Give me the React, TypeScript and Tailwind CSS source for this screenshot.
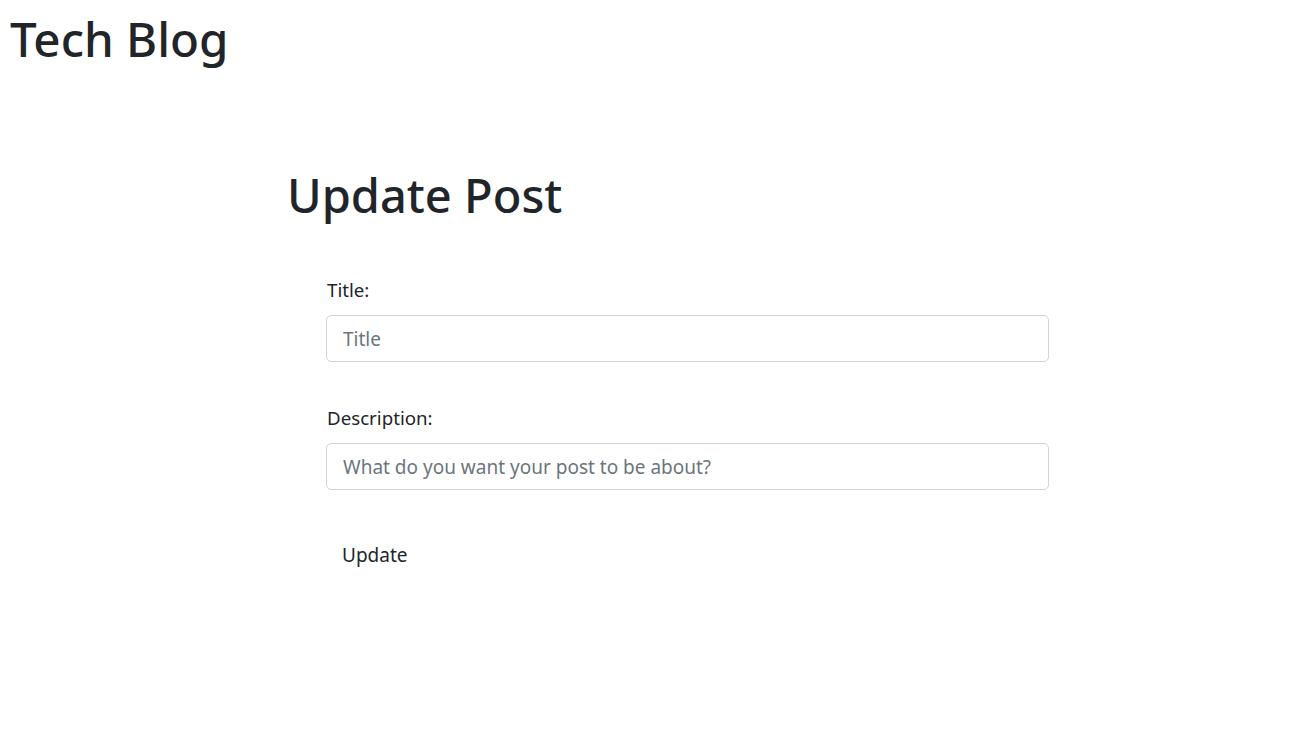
export default function App() {
  return (
    <div className="min-h-screen bg-white text-[#212529] font-['Noto_Sans',sans-serif]">
      <header className="px-[10px] pt-[10px]">
        <h1 className="text-[47.5px] leading-[1.2] font-medium">Tech Blog</h1>
      </header>

      <main className="pl-[287px] pt-[100px]">
        <h2 className="text-[47px] leading-[1.2] font-medium">Update Post</h2>

        <form className="ml-[39px] mt-[53px] w-[723px] flex flex-col">
          <label className="text-[18.7px] leading-[1.5] pl-[1px]">Title:</label>
          <input
            type="text"
            placeholder="Title"
            className="mt-[11px] h-[47px] w-full rounded-[5px] border border-[#ced4da] px-[16px] text-[19px] placeholder:text-[#6c757d] outline-none"
          />

          <label className="mt-[42px] text-[18.7px] leading-[1.5] pl-[1px]">Description:</label>
          <input
            type="text"
            placeholder="What do you want your post to be about?"
            className="mt-[11px] h-[47px] w-full rounded-[5px] border border-[#ced4da] px-[16px] text-[19px] placeholder:text-[#6c757d] outline-none"
          />

          <div className="mt-[43px]">
            <button type="button" className="px-[16px] py-[8px] text-[19px] leading-[1.5] rounded-[5px]">
              Update
            </button>
          </div>
        </form>
      </main>
    </div>
  );
}
